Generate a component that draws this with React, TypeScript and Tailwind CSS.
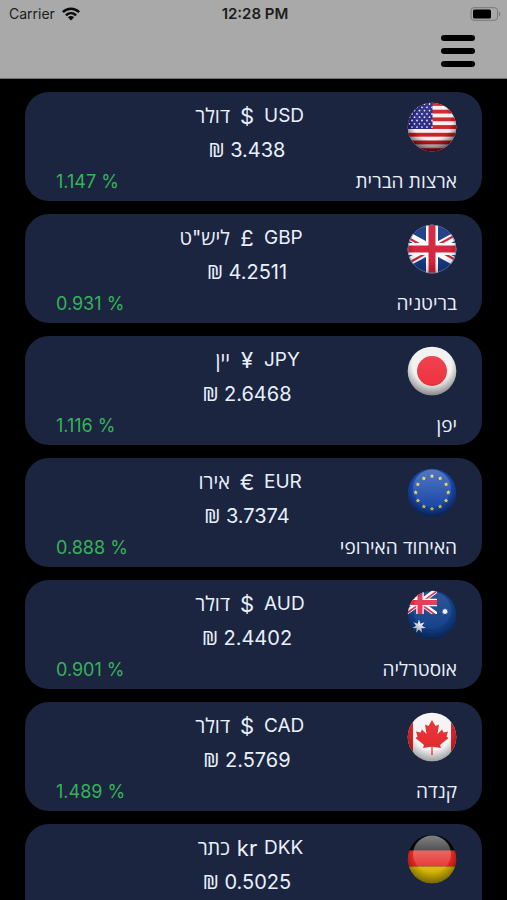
import type { ReactNode } from "react";

type Country = "us" | "gb" | "jp" | "eu" | "au" | "ca" | "de";

interface Rate {
  country: Country;
  code: string;
  symbol: string;
  currency: string;
  value: string;
  place: string;
  change: string;
}

const rates: Rate[] = [
  { country: "us", code: "USD", symbol: "$", currency: "דולר", value: "3.438", place: "ארצות הברית", change: "1.147 %" },
  { country: "gb", code: "GBP", symbol: "£", currency: 'ליש"ט', value: "4.2511", place: "בריטניה", change: "0.931 %" },
  { country: "jp", code: "JPY", symbol: "¥", currency: "יין", value: "2.6468", place: "יפן", change: "1.116 %" },
  { country: "eu", code: "EUR", symbol: "€", currency: "אירו", value: "3.7374", place: "האיחוד האירופי", change: "0.888 %" },
  { country: "au", code: "AUD", symbol: "$", currency: "דולר", value: "2.4402", place: "אוסטרליה", change: "0.901 %" },
  { country: "ca", code: "CAD", symbol: "$", currency: "דולר", value: "2.5769", place: "קנדה", change: "1.489 %" },
  { country: "de", code: "DKK", symbol: "kr", currency: "כתר", value: "0.5025", place: "", change: "" },
];

function starPoints(cx: number, cy: number, outer: number, inner: number, tips: number) {
  return Array.from({ length: tips * 2 }, (_, i) => {
    const r = i % 2 === 0 ? outer : inner;
    const a = (Math.PI * i) / tips - Math.PI / 2;
    return `${(cx + r * Math.cos(a)).toFixed(2)},${(cy + r * Math.sin(a)).toFixed(2)}`;
  }).join(" ");
}

const artwork: Record<Country, ReactNode> = {
  us: (
    <>
      <rect width="50" height="50" fill="#f6f1f0" />
      {[0, 1, 2, 3, 4, 5, 6].map((i) => (
        <rect key={i} y={i * 7.7} width="50" height="3.85" fill="#cf1a22" />
      ))}
      <rect width="25.500" height="27" fill="#23237f" />
      {[0, 1, 2, 3, 4, 5, 6, 7].map((row) =>
        [0, 1, 2, 3, 4].map((col) => (
          <circle key={`${row}-${col}`} cx={2.5 + col * 5 + (row % 2) * 2.5} cy={2 + row * 3.3} r="0.9" fill="#e4e4f4" />
        )),
      )}
    </>
  ),
  gb: (
    <>
      <rect width="50" height="50" fill="#173a86" />
      <path d="M-6 8 56 42M56 8-6 42" stroke="#fff" strokeWidth="8" />
      <path d="M-6 10 25 27M56 7 25 24M-6 43 25 26M56 40 25 23" stroke="#d3203a" strokeWidth="2.2" />
      <path d="M25 0V50M0 25H50" stroke="#fff" strokeWidth="12" />
      <path d="M25 0V50M0 25H50" stroke="#d3203a" strokeWidth="7" />
    </>
  ),
  jp: (
    <>
      <rect width="50" height="50" fill="#f0f1f1" />
      <circle cx="25" cy="25" r="15" fill="#ee2f3c" />
    </>
  ),
  eu: (
    <>
      <rect width="50" height="50" fill="#1746a8" />
      {Array.from({ length: 12 }, (_, i) => (
        <polygon
          key={i}
          points={starPoints(25 + 16.3 * Math.sin((Math.PI * i) / 6), 24.5 - 16.3 * Math.cos((Math.PI * i) / 6), 2.4, 1.1, 5)}
          fill="#f0d64a"
        />
      ))}
    </>
  ),
  au: (
    <>
      <rect width="50" height="50" fill="#123f88" />
      <svg x="0" y="0" width="30" height="24" viewBox="0 0 30 24">
        <path d="M-4 0 30 25M30 0-4 25" stroke="#fff" strokeWidth="5" />
        <path d="M-4 1 30 26M30 1-4 26" stroke="#d92b45" strokeWidth="1.8" />
        <path d="M13 0V24M0 12.500H30" stroke="#fff" strokeWidth="7.500" />
        <path d="M13 0V24M0 12.500H30" stroke="#df2d46" strokeWidth="5" />
      </svg>
      <polygon points={starPoints(12, 36.5, 7, 3, 7)} fill="#e8edf5" />
      <polygon points={starPoints(38, 21.5, 3.2, 2, 7)} fill="#f4f7fb" />
    </>
  ),
  ca: (
    <>
      <rect width="50" height="50" fill="#f4f4f4" />
      <rect width="6" height="50" fill="#df2228" />
      <rect x="44" width="6" height="50" fill="#df2228" />
      <path
        d="M25 8 28.5 14 32 12.500 30.500 22 35 17.500 36.500 20.500 41 19.500 39.500 24.500 41.500 26 33 33 34 36 25.600 34.800V43H24.400V34.800L16 36 17 33 8.500 26 10.500 24.500 9 19.500 13.500 20.500 15 17.500 19.500 22 18 12.500 21.500 14Z"
        fill="#e3262b"
      />
    </>
  ),
  de: (
    <>
      <rect width="50" height="16.500" fill="#050505" />
      <rect y="16.500" width="50" height="16" fill="#e22620" />
      <rect y="32.500" width="50" height="17.500" fill="#d2b400" />
    </>
  ),
};

const gloss: Record<Country, number> = { us: 0.1, gb: 0.06, jp: 0.12, eu: 0.26, au: 0.12, ca: 0.1, de: 0.5 };
const shade: Record<Country, number> = { us: 0.75, gb: 0.25, jp: 0.5, eu: 0.65, au: 0.5, ca: 0.4, de: 0.5 };

function Flag({ country }: { country: Country }) {
  return (
    <svg viewBox="0 0 50 50" className="size-[50px] shrink-0" aria-hidden="true">
      <defs>
        <clipPath id={`${country}-ball`}>
          <circle cx="25" cy="25" r="24.300" />
        </clipPath>
        <linearGradient id={`${country}-gloss`} x1="0" y1="0" x2="0" y2="1">
          <stop offset="0" stopColor="#fff" stopOpacity={gloss[country]} />
          <stop offset="1" stopColor="#fff" stopOpacity="0.02" />
        </linearGradient>
        <radialGradient id={`${country}-shade`} cx="0.5" cy="0.36" r="0.66">
          <stop offset="0.6" stopColor="#000" stopOpacity="0" />
          <stop offset="1" stopColor="#000" stopOpacity={shade[country]} />
        </radialGradient>
      </defs>
      <g clipPath={`url(#${country}-ball)`}>
        {artwork[country]}
        <rect width="50" height="50" fill={`url(#${country}-shade)`} />
        <ellipse cx="25" cy="20" rx="19" ry="18.500" fill={`url(#${country}-gloss)`} />
      </g>
      {country === "gb" && <circle cx="25" cy="25" r="23.800" fill="none" stroke="#6b7690" strokeOpacity="0.7" />}
    </svg>
  );
}

function StatusBar() {
  return (
    <div className="flex h-[27px] items-center pl-[9px] pr-[6px] text-[14px] leading-5 text-[#1c1c1c]">
      <div className="flex flex-1 items-center gap-[7px]">
        <span>Carrier</span>
        <svg viewBox="0 0 18 14" className="h-[14px] w-[18px]" aria-label="Wi-Fi">
          <g fill="none" stroke="#0a0a0a" strokeWidth="2.500">
            <path d="M0.900 5.100C5.500 0.600 12.500 0.600 17.100 5.100" />
            <path d="M3.900 8.300C6.900 5.500 11.100 5.500 14.100 8.300" />
          </g>
          <path d="M5.900 10.300C7.700 8.700 10.300 8.700 12.100 10.300L9 13.600Z" fill="#0a0a0a" />
        </svg>
      </div>
      <span className="text-[15px] font-semibold">12:28 PM</span>
      <div className="flex flex-1 justify-end">
        <svg viewBox="0 0 31 14" className="h-[14px] w-[31px]" aria-label="Battery">
          <rect x="1" y="0.700" width="26.500" height="12.600" rx="3" fill="none" stroke="#777" />
          <rect x="3" y="2.500" width="18" height="9" rx="1.500" fill="#000" />
          <path d="M29 4.500C30.700 5.200 30.700 8.800 29 9.500Z" fill="#777" />
        </svg>
      </div>
    </div>
  );
}

function RateCard({ rate }: { rate: Rate }) {
  return (
    <li className="rounded-[24px] bg-[#1b2540] pt-[10px] pr-[25px] pb-[5px] pl-[31px] text-[#eaf0fb]">
      <div className="flex pl-[31px]">
        <div className="flex-1">
          <div className="grid grid-cols-[1fr_34px_1fr] text-[19px] leading-7">
            <span lang="he" dir="rtl" className="text-right text-[20px]">
              {rate.currency}
            </span>
            <span className="text-center text-[22px]">{rate.symbol}</span>
            <span>{rate.code}</span>
          </div>
          <p className="pt-[6px] text-center text-[20px] leading-7">
            <span className="font-['Noto_Sans','DejaVu_Sans',sans-serif]">₪</span> {rate.value}
          </p>
        </div>
        <Flag country={rate.country} />
      </div>
      <div className="flex min-h-8 justify-between pt-1 text-[18px] leading-7">
        <span className="text-[#35b457]">{rate.change}</span>
        <span lang="he" dir="rtl" className="text-[19px]">
          {rate.place}
        </span>
      </div>
    </li>
  );
}

export default function App() {
  return (
    <div className="flex h-screen flex-col overflow-hidden bg-black font-['Inter','Open_Sans','Liberation_Sans',sans-serif]">
      <header className="shrink-0 border-b border-[#6f6f6f] bg-[#a9a9a9]">
        <StatusBar />
        <div className="flex justify-end pt-[8px] pr-[32px] pb-[11px]">
          <button type="button" aria-label="תפריט" className="flex w-[34px] flex-col gap-[7px]">
            <span className="h-[6px] w-full rounded-full bg-black" />
            <span className="h-[6px] w-full rounded-full bg-black" />
            <span className="h-[6px] w-full rounded-full bg-black" />
          </button>
        </div>
      </header>
      <main className="flex-1 overflow-y-auto px-[25px] py-[13px] [scrollbar-width:none]">
        <ul className="flex flex-col gap-[13px]">
          {rates.map((rate) => (
            <RateCard key={rate.code} rate={rate} />
          ))}
        </ul>
      </main>
    </div>
  );
}
